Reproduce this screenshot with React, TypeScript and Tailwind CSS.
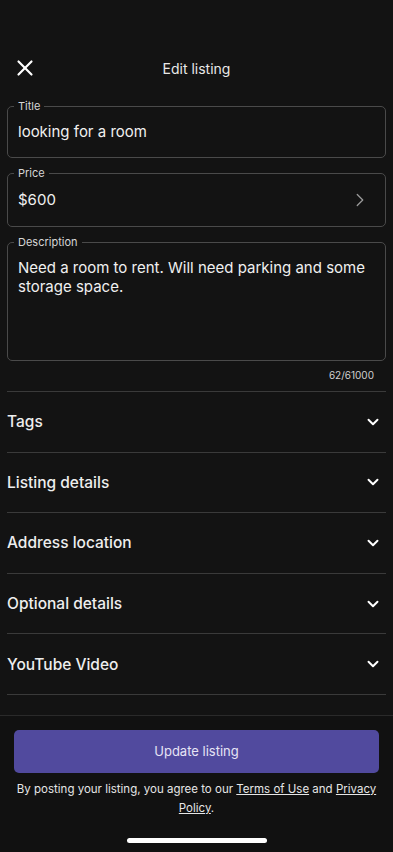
import { X, ChevronRight, ChevronDown } from 'lucide-react'

const sections = ['Tags', 'Listing details', 'Address location', 'Optional details', 'YouTube Video']

function Field({
  label,
  children,
  className = '',
}: {
  label: string
  children: React.ReactNode
  className?: string
}) {
  return (
    <fieldset className={`mx-[7px] rounded-[5px] border border-[#4a4a4a] px-[6px] ${className}`}>
      <legend className="px-1 text-[11px] leading-[13px] text-[#d6d6d6]">{label}</legend>
      {children}
    </fieldset>
  )
}

export default function App() {
  return (
    <div
      className="flex h-[852px] w-[393px] flex-col overflow-hidden bg-[#131313] text-[#f0f0f0]"
      style={{ fontFamily: 'Inter, "Noto Sans", sans-serif' }}
    >
      {/* Header */}
      <div className="mt-[48px] flex h-10 items-center px-3">
        <X size={26} strokeWidth={2} className="text-white" />
        <div className="flex-1 pr-[26px] text-center text-[14px] text-[#e8e8e8]">Edit listing</div>
      </div>

      {/* Form */}
      <div className="mt-[12px] flex flex-col gap-[9px]">
        <Field label="Title">
          <div className="pl-1 pt-[9px] pb-[15px] text-[15px] leading-5">looking for a room</div>
        </Field>

        <Field label="Price">
          <div className="flex items-center justify-between pl-1 pt-[9px] pb-[15px] text-[15px] leading-5">
            <span>$600</span>
            <ChevronRight size={22} strokeWidth={1.4} className="mr-[8px] text-[#9a9a9a]" />
          </div>
        </Field>

        <Field label="Description">
          <div className="h-[111px] pl-1 pt-[9px] text-[15px] leading-[19px]">
            Need a room to rent. Will need parking and some storage space.
          </div>
        </Field>
      </div>

      <div className="mt-[8px] pr-[19px] text-right text-[10px] leading-3 text-[#d0d0d0]">62/61000</div>

      {/* Accordion sections */}
      <div className="mx-[7px] mt-[10px] border-t border-[#3a3a3a]">
        {sections.map((s) => (
          <div
            key={s}
            className="flex h-[60.6px] items-center justify-between border-b border-[#3a3a3a]"
          >
            <span className="text-[15.5px] font-medium text-[#eeeeee]">{s}</span>
            <ChevronDown size={18} strokeWidth={2.6} className="mr-[4px] text-white" />
          </div>
        ))}
      </div>

      {/* Footer */}
      <div className="mt-[20px] flex flex-1 flex-col border-t border-[#2a2a2a] bg-[#111111]">
        <button className="mx-[14px] mt-[14px] h-[43px] rounded-[5px] bg-[#514a9e] text-[13px] text-[#e6e4f5]">
          Update listing
        </button>
        <p className="mt-[7px] px-[12px] text-center text-[11.5px] leading-[19px] text-[#e6e6e6]">
          By posting your listing, you agree to our <span className="underline">Terms of Use</span> and{' '}
          <span className="underline">Privacy Policy</span>.
        </p>
        <div className="mt-auto mb-[9px] flex justify-center">
          <div className="h-[5px] w-[140px] rounded-full bg-white" />
        </div>
      </div>
    </div>
  )
}
